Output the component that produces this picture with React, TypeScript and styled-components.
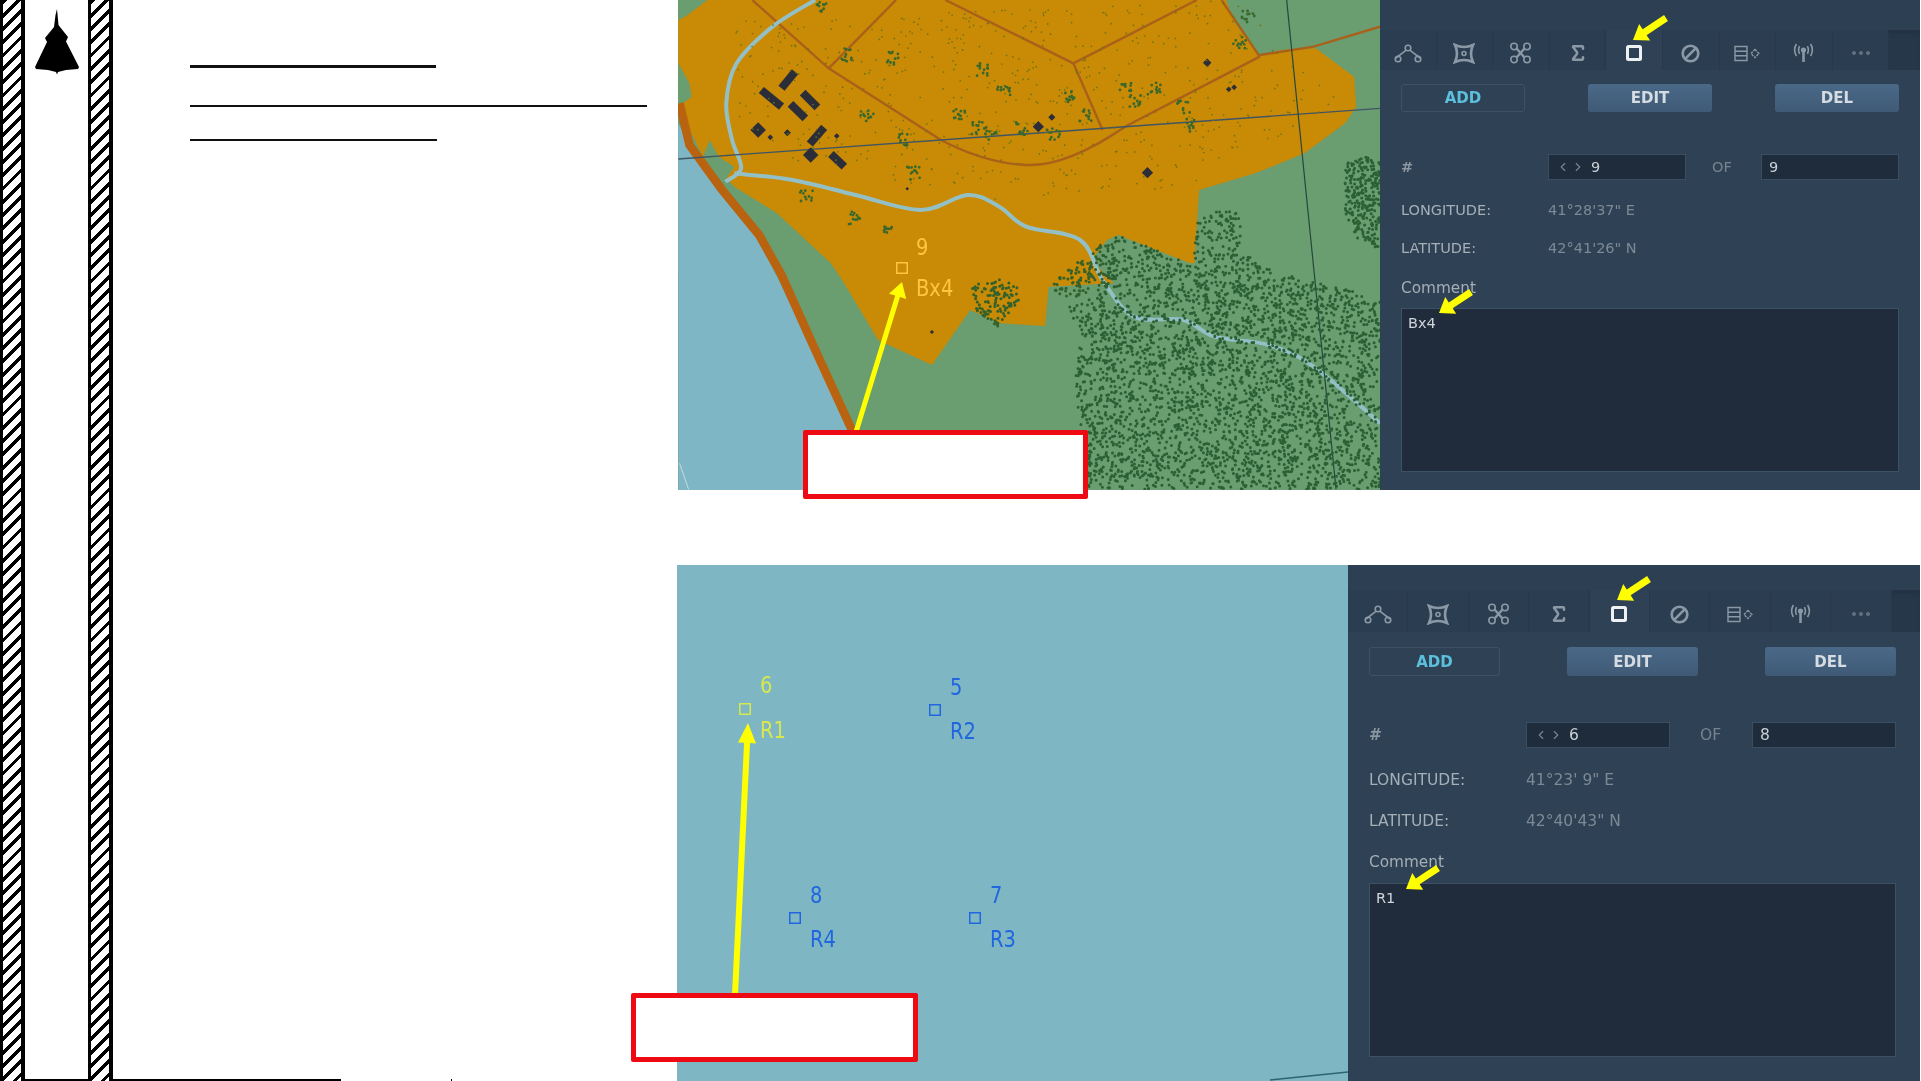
import React from "react";
import styled, { createGlobalStyle } from "styled-components";
import { ChevronLeft, ChevronRight, Sigma } from "lucide-react";

const Global = createGlobalStyle`
  html, body { margin: 0; padding: 0; background: #fff; }
  #root { width: 1921px; height: 1081px; overflow: hidden; }
`;

const Page = styled.div`
  display: flex;
  width: 1921px;
  height: 1081px;
  overflow: hidden;
  background: #fff;
  font-family: "DejaVu Sans", sans-serif;
`;

const Hatch = styled.div`
  flex: 0 0 25px;
  box-sizing: border-box;
  height: 100%;
  border-left: 3px solid #000;
  border-right: 4px solid #000;
  background: repeating-linear-gradient(135deg, #000 0 3.4px, #fff 3.4px 9.4px);
`;

const Gutter = styled.div`
  flex: 0 0 63px;
  box-sizing: border-box;
  height: 1081px;
  border-bottom: 2px solid #000;
`;

const PlaneIcon = styled.svg`
  display: block;
  width: 63px;
  height: 80px;
`;

const NotesColumn = styled.div`
  flex: 0 0 564px;
  display: flex;
  flex-direction: column;
  box-sizing: border-box;
  padding-left: 77px;
  height: 100%;
`;

const BlankLine = styled.div<{ $w: number; $mt: number; $t: number }>`
  width: ${(p) => p.$w}px;
  height: ${(p) => p.$t}px;
  margin-top: ${(p) => p.$mt}px;
  background: #111;
`;

const BaseRow = styled.div`
  margin-top: auto;
  margin-left: -77px;
  display: flex;
  align-items: flex-end;
`;

const BaseRule = styled.div`
  width: 228px;
  height: 2px;
  background: #000;
`;

const BaseTick = styled.div`
  width: 1px;
  height: 2px;
  margin-left: 110px;
  background: #000;
`;

const Figures = styled.div`
  flex: 0 0 1244px;
  display: flex;
  flex-direction: column;
  gap: 75px;
`;

const Figure = styled.div<{ $ml: number; $h: number }>`
  position: relative;
  display: flex;
  margin-left: ${(p) => p.$ml}px;
  width: ${(p) => 1243 - p.$ml}px;
  height: ${(p) => p.$h}px;
`;

const MapArt = styled.svg<{ $w: number }>`
  flex: 0 0 ${(p) => p.$w}px;
  display: block;
  height: 100%;
  filter: blur(0.45px);
`;

const Overlay = styled.svg`
  position: absolute;
  inset: 0;
  width: 100%;
  height: 100%;
  overflow: visible;
  pointer-events: none;
`;

const RedBox = styled.div<{ $l: number; $t: number; $w: number; $h: number }>`
  position: absolute;
  left: ${(p) => p.$l}px;
  top: ${(p) => p.$t}px;
  width: ${(p) => p.$w}px;
  height: ${(p) => p.$h}px;
  box-sizing: border-box;
  background: #fff;
  border: 5.5px solid #ee0a12;
  border-radius: 2px;
`;

type Metrics = {
  width: number;
  head: number;
  bar: number;
  tab: number;
  padL: number;
  padR: number;
  btnTop: number;
  btnH: number;
  btnW: number;
  numTop: number;
  cols: string;
  ofPad: number;
  rowTop: number;
  rowH: number;
  commentH: number;
  boxH: number;
  font: number;
};

const Panel = styled.div<{ $m: Metrics }>`
  flex: 0 0 ${(p) => p.$m.width}px;
  height: 100%;
  display: flex;
  flex-direction: column;
  background: #2f4155;
  color: #a5afb6;
  font-size: ${(p) => p.$m.font}px;
`;

const PanelBody = styled.div<{ $m: Metrics }>`
  display: flex;
  flex-direction: column;
  padding: 0 ${(p) => p.$m.padR}px 0 ${(p) => p.$m.padL}px;
  filter: blur(0.4px);
`;

const HeadStrip = styled.div<{ $h: number }>`
  height: ${(p) => p.$h}px;
  background: #2d3f52;
`;

const Toolbar = styled.div<{ $h: number }>`
  height: ${(p) => p.$h}px;
  display: flex;
  background: #263749;
  box-shadow: inset 0 4px 5px -2px #223142;
  filter: blur(0.4px);
`;

const Tab = styled.div<{ $w: number; $active?: boolean }>`
  flex: 0 0 ${(p) => p.$w}px;
  display: flex;
  align-items: center;
  justify-content: center;
  box-sizing: border-box;
  padding-top: 6px;
  border-right: 1px solid #27384a;
  background: ${(p) => (p.$active ? "#2f4155" : "#2b3d50")};
  color: ${(p) => (p.$active ? "#eef1f3" : "#8b99a6")};
`;

const ButtonRow = styled.div<{ $m: Metrics }>`
  display: flex;
  justify-content: space-between;
  margin-top: ${(p) => p.$m.btnTop}px;
`;

const ActionButton = styled.div<{ $m: Metrics; $ghost?: boolean }>`
  width: ${(p) => p.$m.btnW}px;
  height: ${(p) => p.$m.btnH}px;
  display: flex;
  align-items: center;
  justify-content: center;
  box-sizing: border-box;
  border-radius: 3px;
  font-weight: 700;
  font-size: 15px;
  color: ${(p) => (p.$ghost ? "#5cc0dc" : "#d5dce2")};
  border: ${(p) => (p.$ghost ? "1px solid #3c5267" : "none")};
  background: ${(p) => (p.$ghost ? "#2e4155" : "linear-gradient(#4a6988, #3f5a76)")};
`;

const NumberRow = styled.div<{ $m: Metrics }>`
  display: grid;
  grid-template-columns: ${(p) => p.$m.cols};
  align-items: center;
  margin-top: ${(p) => p.$m.numTop}px;
`;

const FieldBox = styled.div`
  height: 26px;
  display: flex;
  align-items: center;
  gap: 1px;
  padding: 0 7px;
  box-sizing: border-box;
  background: #1f2c3c;
  border: 1px solid #3a4e63;
  color: #c9d0d5;
  svg { color: #76848f; flex: none; }
`;

const FieldValue = styled.span<{ $ml?: number }>`
  margin-left: ${(p) => p.$ml ?? 0}px;
`;

const OfLabel = styled.span<{ $pad: number }>`
  padding-left: ${(p) => p.$pad}px;
  color: #77848f;
`;

const HashLabel = styled.span`
  color: #8a96a0;
  font-weight: 700;
`;

const InfoRow = styled.div<{ $m: Metrics; $first?: boolean }>`
  display: grid;
  grid-template-columns: ${(p) => p.$m.cols};
  align-items: center;
  height: ${(p) => p.$m.rowH}px;
  margin-top: ${(p) => (p.$first ? p.$m.rowTop : 0)}px;
`;

const InfoLabel = styled.span`
  color: #a5afb6;
  white-space: nowrap;
`;

const InfoValue = styled.span`
  grid-column: 2 / span 3;
  color: #7c8a95;
`;

const CommentLabel = styled.div<{ $h: number }>`
  height: ${(p) => p.$h}px;
  display: flex;
  align-items: center;
  color: #a5afb6;
  font-size: 15.3px;
`;

const CommentBox = styled.div<{ $h: number }>`
  height: ${(p) => p.$h}px;
  box-sizing: border-box;
  padding: 6px 6px;
  background: #202c3b;
  border: 1px solid #3d5166;
  color: #cfd5da;
  font-size: 14.5px;
`;

/* ---------- icons ---------- */
const Ic = styled.svg`
  display: block;
  fill: none;
  stroke: currentColor;
`;

const NodesIcon = () => (
  <Ic width="28" height="19" viewBox="0 0 28 19" strokeWidth="1.6">
    <circle cx="14" cy="4" r="2.8" />
    <circle cx="4" cy="15" r="2.8" />
    <circle cx="24" cy="15" r="2.8" />
    <path d="M12.2 6.2 2 14M15.8 6.2 26 14" />
  </Ic>
);
const FrameIcon = () => (
  <Ic width="22" height="21" viewBox="0 0 22 21" strokeWidth="2.6">
    <path d="M2 2Q11 6 20 2Q16 10.5 20 19Q11 15 2 19Q6 10.5 2 2Z" />
    <circle cx="11" cy="10.5" r="2" strokeWidth="1.6" />
  </Ic>
);
const DroneIcon = () => (
  <Ic width="23" height="22" viewBox="0 0 23 22" strokeWidth="1.6">
    <circle cx="5" cy="4.5" r="3.2" />
    <circle cx="18" cy="4.5" r="3.2" />
    <circle cx="5" cy="17.5" r="3.2" />
    <circle cx="18" cy="17.5" r="3.2" />
    <path d="M7.5 6.5 15.5 15.5M15.5 6.5 7.5 15.5" strokeWidth="2.4" />
  </Ic>
);
const SquareIcon = () => (
  <Ic width="16" height="16" viewBox="0 0 16 16" strokeWidth="3">
    <rect x="1.5" y="1.5" width="13" height="13" rx="1" />
  </Ic>
);
const SlashCircleIcon = () => (
  <Ic width="19" height="19" viewBox="0 0 19 19" strokeWidth="2.6">
    <circle cx="9.5" cy="9.5" r="7.8" />
    <path d="M4.2 14.8 14.8 4.2" />
  </Ic>
);
const DataIcon = () => (
  <Ic width="26" height="17" viewBox="0 0 26 17" strokeWidth="1.4">
    <path d="M1 1.5H13V15.5H1ZM1 6.2H13M1 10.8H13" />
    <path d="M21 4.5 25 8.5 21 12.5 17 8.5Z" strokeDasharray="2.4 1" />
  </Ic>
);
const AntennaIcon = () => (
  <Ic width="21" height="20" viewBox="0 0 21 20" strokeWidth="1.6">
    <circle cx="10.5" cy="7" r="1.8" fill="currentColor" />
    <path d="M10.5 8v11" strokeWidth="2.6" />
    <path d="M6.6 3.2Q4.6 7 6.6 10.8M14.4 3.2Q16.4 7 14.4 10.8M3.4 1Q-.2 7 3.4 13M17.6 1Q21.2 7 17.6 13" />
  </Ic>
);
const DotsIcon = () => (
  <Ic width="20" height="4" viewBox="0 0 20 4" stroke="none" style={{ opacity: 0.55 }}>
    <circle cx="3" cy="2" r="1.6" fill="currentColor" />
    <circle cx="10" cy="2" r="1.6" fill="currentColor" />
    <circle cx="17" cy="2" r="1.6" fill="currentColor" />
  </Ic>
);

const toolIcons = [
  <NodesIcon />,
  <FrameIcon />,
  <DroneIcon />,
  <Sigma size={20} strokeWidth={3} />,
  <SquareIcon />,
  <SlashCircleIcon />,
  <DataIcon />,
  <AntennaIcon />,
  <DotsIcon />,
];

type PanelData = { index: string; total: string; lon: string; lat: string; comment: string };

const EditorPanel = ({ m, d }: { m: Metrics; d: PanelData }) => (
  <Panel $m={m}>
    <HeadStrip $h={m.head} />
    <Toolbar $h={m.bar}>
      {toolIcons.map((icon, i) => (
        <Tab key={i} $w={m.tab} $active={i === 4}>
          {icon}
        </Tab>
      ))}
    </Toolbar>
    <PanelBody $m={m}>
      <ButtonRow $m={m}>
        <ActionButton $m={m} $ghost>ADD</ActionButton>
        <ActionButton $m={m}>EDIT</ActionButton>
        <ActionButton $m={m}>DEL</ActionButton>
      </ButtonRow>
      <NumberRow $m={m}>
        <HashLabel>#</HashLabel>
        <FieldBox>
          <ChevronLeft size={14} />
          <ChevronRight size={14} />
          <FieldValue $ml={5}>{d.index}</FieldValue>
        </FieldBox>
        <OfLabel $pad={m.ofPad}>OF</OfLabel>
        <FieldBox>
          <FieldValue>{d.total}</FieldValue>
        </FieldBox>
      </NumberRow>
      <InfoRow $m={m} $first>
        <InfoLabel>LONGITUDE:</InfoLabel>
        <InfoValue>{d.lon}</InfoValue>
      </InfoRow>
      <InfoRow $m={m}>
        <InfoLabel>LATITUDE:</InfoLabel>
        <InfoValue>{d.lat}</InfoValue>
      </InfoRow>
      <CommentLabel $h={m.commentH}>Comment</CommentLabel>
      <CommentBox $h={m.boxH}>{d.comment}</CommentBox>
    </PanelBody>
  </Panel>
);

/* ---------- arrows ---------- */
const Arrow = ({ from, to, w, hw, hl }: { from: number[]; to: number[]; w: number; hw: number; hl: number }) => {
  const dx = to[0] - from[0];
  const dy = to[1] - from[1];
  const len = Math.hypot(dx, dy);
  const ux = dx / len, uy = dy / len;
  const nx = -uy, ny = ux;
  const bx = to[0] - ux * hl, by = to[1] - uy * hl;
  const pts = [
    [from[0] + (nx * w) / 2, from[1] + (ny * w) / 2],
    [bx + (nx * w) / 2, by + (ny * w) / 2],
    [bx + (nx * hw) / 2, by + (ny * hw) / 2],
    to,
    [bx - (nx * hw) / 2, by - (ny * hw) / 2],
    [bx - (nx * w) / 2, by - (ny * w) / 2],
    [from[0] - (nx * w) / 2, from[1] - (ny * w) / 2],
  ];
  return <polygon points={pts.map((q) => q.join(",")).join(" ")} fill="#ffff00" />;
};

/* ---------- waypoint marks ---------- */
const Mark = ({ x, y, num, name, color, nx, ny, ly, s = 12 }: { x: number; y: number; num: string; name: string; color: string; nx: number; ny: number; ly: number; s?: number }) => (
  <g fill={color} fontFamily="'DejaVu Sans', sans-serif" fontSize="19.5">
    <rect x={x + 0.75} y={y + 0.75} width={s - 1.5} height={s - 1.5} fill="none" stroke={color} strokeWidth="1.5" />
    <text transform={`translate(${nx} ${ny}) scale(1 1.15)`}>{num}</text>
    <text transform={`translate(${nx} ${ly}) scale(1 1.15)`}>{name}</text>
  </g>
);

/* ---------- generated map texture ---------- */
const rng = (seed: number) => () => {
  seed |= 0;
  seed = (seed + 0x6d2b79f5) | 0;
  let t = Math.imul(seed ^ (seed >>> 15), 1 | seed);
  t = (t + Math.imul(t ^ (t >>> 7), 61 | t)) ^ t;
  return ((t ^ (t >>> 14)) >>> 0) / 4294967296;
};

const toPage = (zx: number, zy: number) => [676 + zx * 0.449, zy / 3];

const smooth = (p: number[][]) => {
  let d = `M${p[0][0]} ${p[0][1]}`;
  for (let i = 0; i < p.length - 1; i++) {
    const a = p[Math.max(i - 1, 0)], b = p[i], c = p[i + 1], e = p[Math.min(i + 2, p.length - 1)];
    d += `C${b[0] + (c[0] - a[0]) / 6} ${b[1] + (c[1] - a[1]) / 6} ${c[0] - (e[0] - b[0]) / 6} ${c[1] - (e[1] - b[1]) / 6} ${c[0]} ${c[1]}`;
  }
  return d;
};

const riverNorth = smooth([[310,0],[215,80],[135,190],[112,310],[125,420],[145,505],[110,545]]);
const riverMain = smooth([[130,520],[260,540],[400,585],[545,630],[650,585],[720,620],[780,680],[900,720],[950,840],[1020,950],[1130,960],[1200,1010],[1320,1035],[1420,1100],[1568,1270]]);

const inPoly = (x: number, y: number, poly: number[][]) => {
  let inside = false;
  for (let i = 0, j = poly.length - 1; i < poly.length; j = i++) {
    const [xi, yi] = poly[i];
    const [xj, yj] = poly[j];
    if (yi > y !== yj > y && x < ((xj - xi) * (y - yi)) / (yj - yi) + xi) inside = !inside;
  }
  return inside;
};

const forestA = [[985,705],[1150,790],[1165,640],[1255,630],[1265,760],[1310,800],[1430,850],[1530,880],[1568,900],[1568,1468],[920,1468],[885,1130],[900,990],[870,920],[960,870],[940,770]];
const forestB = [[1490,490],[1540,470],[1568,480],[1568,750],[1520,720],[1490,640]];
const thicketA = [[650,860],[720,835],[775,860],[760,910],[715,985],[670,935]];
const thicketB = [[835,855],[890,790],[960,720],[985,790],[960,870],[860,900]];
const orange = [[20,50],[70,0],[1225,0],[1245,70],[1300,170],[1345,150],[1425,145],[1510,230],[1515,320],[1490,370],[1400,460],[1290,520],[1165,570],[1155,790],[1145,790],[985,705],[960,720],[925,780],[975,850],[830,860],[822,978],[720,970],[655,930],[570,1095],[450,1020],[370,840],[345,790],[225,640],[130,560],[112,535],[130,500],[95,470],[75,420],[60,470],[5,320],[35,290],[30,250],[5,190],[5,60]];

const speckle = (poly: number[][], n: number, seed: number) => {
  const r = rng(seed);
  const xs = poly.map((p) => p[0]);
  const ys = poly.map((p) => p[1]);
  const x0 = Math.min(...xs), x1 = Math.max(...xs), y0 = Math.min(...ys), y1 = Math.max(...ys);
  let d = "";
  let count = 0;
  let guard = 0;
  while (count < n && guard < n * 20) {
    guard++;
    const zx = x0 + r() * (x1 - x0);
    const zy = y0 + r() * (y1 - y0);
    if (!inPoly(zx, zy, poly)) continue;
    const [px, py] = toPage(zx, zy);
    d += `M${px.toFixed(1)} ${py.toFixed(1)}h0`;
    count++;
  }
  return d;
};

const clusters: number[][] = [[290,590],[400,655],[470,685],[425,350],[485,175],[685,210],[730,265],[630,345],[670,385],[770,385],[880,290],[910,345],[1000,265],[1065,265],[1020,300],[1130,320],[1150,375],[1255,125],[1275,50],[320,15],[380,165],[530,520],[700,400],[500,420],[840,405]];
const clusterPath = (() => {
  const r = rng(77);
  let d = "";
  clusters.forEach(([cx, cy]) => {
    for (let i = 0; i < 12; i++) {
      const [px, py] = toPage(cx + (r() - 0.5) * 30, cy + (r() - 0.5) * 40);
      d += `M${px.toFixed(1)} ${py.toFixed(1)}h0`;
    }
  });
  return d;
})();

const texture = {
  forest: speckle(forestA, 3400, 3) + speckle(forestB, 260, 5),
  thicket: speckle(thicketA, 110, 9) + speckle(thicketB, 120, 11),
  fine: speckle([[130,60],[1240,0],[1490,300],[1150,560],[700,600],[300,500],[130,400]], 560, 13),
  clusters: clusterPath,
};

const buildingBars = [[265,215,235,265],[190,270,235,320],[282,278,315,322],[255,312,288,355],[330,382,298,432],[345,462,375,500]];
const buildingSpots = [[183,390,11],[300,465,11],[1050,518,8],[807,380,8],[837,352,5],[1183,188,6],[248,398,5],[210,412,4],[1231,268,4],[1243,262,4],[358,408,4],[570,996,3],[515,566,2.5]];

const Z = "translate(676 0) scale(0.449 0.33333)";

const TerrainMap = () => (
  <MapArt $w={702} viewBox="678 0 702 490" preserveAspectRatio="none">
    <rect x="678" y="0" width="702" height="490" fill="#6a9d70" />
    <g transform={Z}>
      <polygon points="5,370 40,460 100,570 180,710 225,830 295,1020 385,1290 420,1470 5,1470" fill="#7fb6c5" />
      <polygon points={orange.map((p) => p.join(",")).join(" ")} fill="#c98a05" />
      <path d="M8 310 30 435 100 565 185 705 235 825 300 1020 395 1300" fill="none" stroke="#b9620f" strokeWidth="8.5" vectorEffect="non-scaling-stroke" />
      <g fill="none" stroke="#a9611a" strokeWidth="2.4">
        <path vectorEffect="non-scaling-stroke" d="M170 0 340 205 590 420Q690 490 780 495T1000 380L1300 170" />
        <path vectorEffect="non-scaling-stroke" d="M490 0 340 205" />
        <path vectorEffect="non-scaling-stroke" d="M600 0 885 190 1160 0" />
        <path vectorEffect="non-scaling-stroke" d="M885 190 950 390" />
        <path vectorEffect="non-scaling-stroke" d="M1215 0 1300 170" />
        <path vectorEffect="non-scaling-stroke" d="M1300 165 1420 140 1568 80" />
      </g>
      <path d={riverNorth} fill="none" stroke="#93c0c6" strokeWidth="4" strokeLinejoin="round" vectorEffect="non-scaling-stroke" />
      <path d={riverMain} fill="none" stroke="#93c0c6" strokeWidth="4" strokeLinejoin="round" vectorEffect="non-scaling-stroke" />
      <path d="M5 477 1568 325" fill="none" stroke="#3f5566" strokeWidth="1.4" vectorEffect="non-scaling-stroke" />
      <path d="M1360 0 1470 1468" fill="none" stroke="#25483c" strokeWidth="1.2" vectorEffect="non-scaling-stroke" />
      <path d="M8 1390 28 1468" fill="none" stroke="#c6dbe0" strokeWidth="1" vectorEffect="non-scaling-stroke" />
      {buildingBars.map((b, i) => (
        <path key={i} d={`M${b[0]} ${b[1]}L${b[2]} ${b[3]}`} stroke="#2b2e38" strokeWidth="8" vectorEffect="non-scaling-stroke" />
      ))}
    </g>
    {buildingSpots.map(([zx, zy, s], i) => {
      const [x, y] = toPage(zx, zy);
      return <rect key={i} x={x - s / 2} y={y - s / 2} width={s} height={s} fill="#2b2e38" transform={`rotate(45 ${x} ${y})`} />;
    })}
    <path d={texture.fine} stroke="#6e7416" strokeWidth="1.7" strokeLinecap="round" />
    <path d={texture.clusters} stroke="#3a682c" strokeWidth="2.8" strokeLinecap="round" />
    <path d={texture.thicket} stroke="#33612c" strokeWidth="3" strokeLinecap="round" />
    <path d={texture.forest} stroke="#2b5f34" strokeWidth="3" strokeLinecap="round" />
    <Mark x={896} y={262} s={12} num="9" name="Bx4" color="#ffc63d" nx={916} ny={255} ly={296} />
  </MapArt>
);

const SeaMap = () => (
  <MapArt $w={671} viewBox="677 565 671 516" preserveAspectRatio="none">
    <rect x="677" y="565" width="671" height="516" fill="#7fb6c4" />
    <path d="M1270 1080 1348 1072" stroke="#2e6470" strokeWidth="1.5" fill="none" />
    <Mark x={739} y={703} num="6" name="R1" color="#d6e84e" nx={760} ny={693} ly={738} />
    <Mark x={929} y={704} num="5" name="R2" color="#1f66df" nx={950} ny={695} ly={739} />
    <Mark x={789} y={912} num="8" name="R4" color="#1f66df" nx={810} ny={903} ly={947} />
    <Mark x={969} y={912} num="7" name="R3" color="#1f66df" nx={990} ny={903} ly={947} />
  </MapArt>
);

const topMetrics: Metrics = {
  width: 540, head: 30, bar: 40, tab: 56.6, padL: 21, padR: 21,
  btnTop: 14, btnH: 28, btnW: 124, numTop: 42,
  cols: "147px 138px 75px 138px", ofPad: 26,
  rowTop: 11, rowH: 38, commentH: 41, boxH: 164, font: 14.5,
};

const bottomMetrics: Metrics = {
  width: 572, head: 25, bar: 42, tab: 60.4, padL: 21, padR: 24,
  btnTop: 15, btnH: 29, btnW: 131, numTop: 46,
  cols: "157px 144px 82px 144px", ofPad: 30,
  rowTop: 12, rowH: 40.5, commentH: 42, boxH: 174, font: 15.5,
};

export default function App() {
  return (
    <Page>
      <Global />
      <Hatch />
      <Gutter>
        <PlaneIcon viewBox="25 0 63 80">
          <path d="M57 9 58.5 25 60 27 68 37 66 41.5 79 67 78 69 66 70 58 72 57 74.5 56 72 48 70 36 69 35 67 47 42 45 38 54 27 55.5 15Z" fill="#000" />
        </PlaneIcon>
      </Gutter>
      <Hatch />
      <NotesColumn>
        <BlankLine $w={246} $mt={65} $t={2.5} />
        <BlankLine $w={457} $mt={37} $t={2} />
        <BlankLine $w={247} $mt={32.5} $t={2} />
        <BaseRow>
          <BaseRule />
          <BaseTick />
        </BaseRow>
      </NotesColumn>
      <Figures>
        <Figure $ml={1} $h={490}>
          <TerrainMap />
          <EditorPanel
            m={topMetrics}
            d={{ index: "9", total: "9", lon: `41°28'37" E`, lat: `42°41'26" N`, comment: "Bx4" }}
          />
          <Overlay viewBox="678 0 1242 490">
            <Arrow from={[856, 432]} to={[902, 282]} w={5} hw={18} hl={15} />
            <Arrow from={[1666, 18]} to={[1633, 40]} w={7} hw={20} hl={14} />
            <Arrow from={[1471, 292]} to={[1439, 313]} w={7} hw={20} hl={14} />
          </Overlay>
          <RedBox $l={125} $t={430} $w={285} $h={69} />
        </Figure>
        <Figure $ml={0} $h={516}>
          <SeaMap />
          <EditorPanel
            m={bottomMetrics}
            d={{ index: "6", total: "8", lon: `41°23' 9" E`, lat: `42°40'43" N`, comment: "R1" }}
          />
          <Overlay viewBox="677 565 1243 516">
            <Arrow from={[735, 995]} to={[748, 723]} w={6} hw={18} hl={20} />
            <Arrow from={[1649, 579]} to={[1617, 600]} w={7} hw={20} hl={14} />
            <Arrow from={[1438, 868]} to={[1406, 889]} w={7} hw={20} hl={14} />
          </Overlay>
          <RedBox $l={-46} $t={428} $w={287} $h={69} />
        </Figure>
      </Figures>
    </Page>
  );
}
